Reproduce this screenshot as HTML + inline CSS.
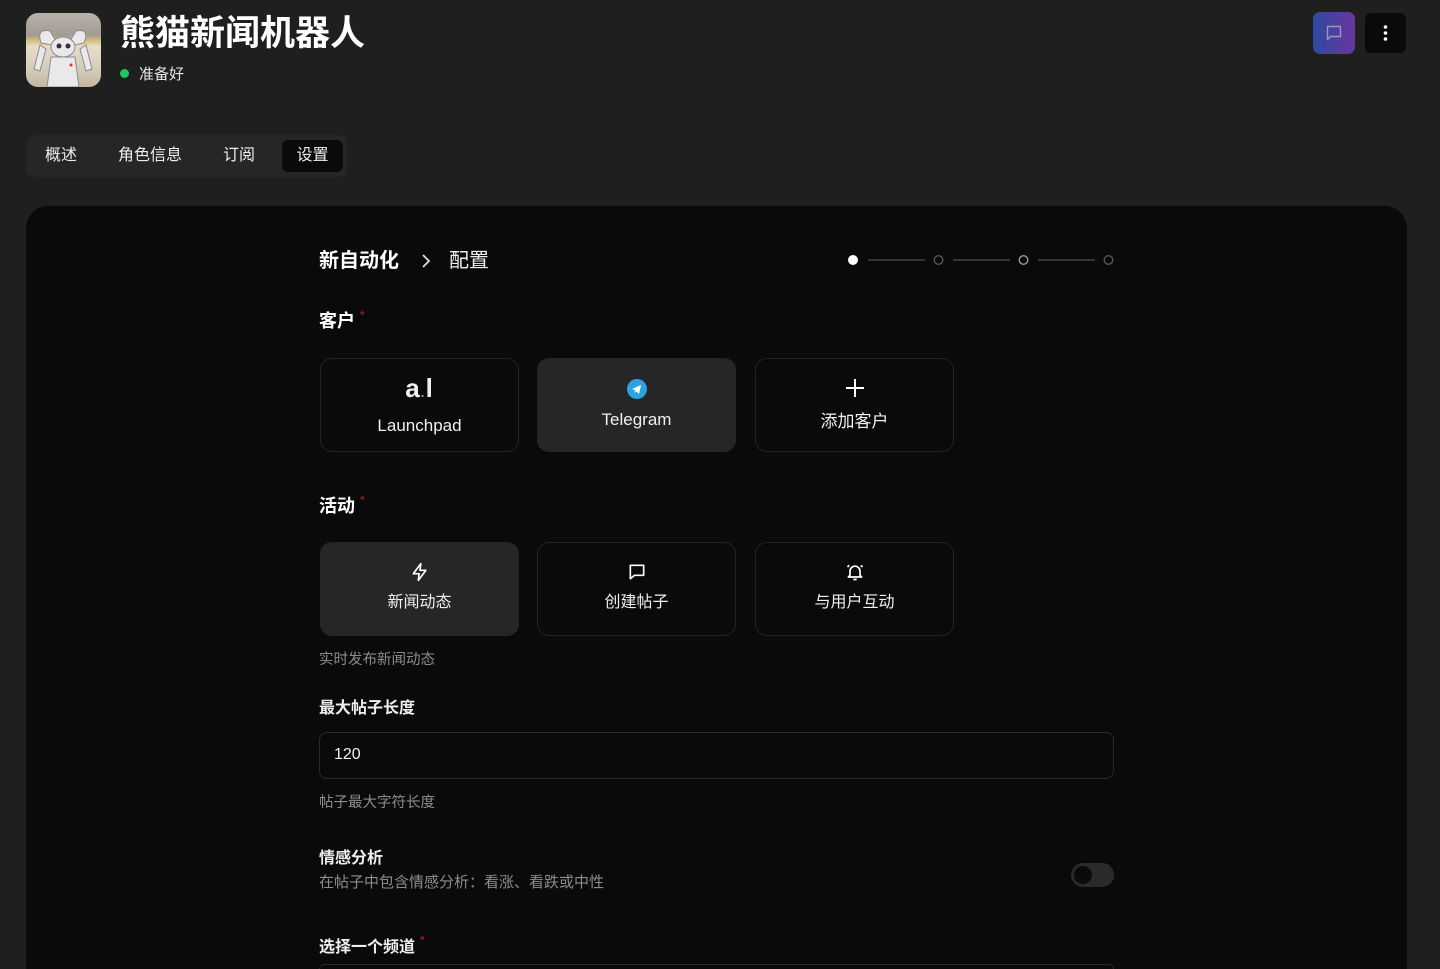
<!DOCTYPE html>
<html><head><meta charset="utf-8">
<style>
*{box-sizing:border-box;margin:0;padding:0}
html{width:1440px;height:969px;overflow:hidden}
body{width:1440px;height:969px;overflow:hidden;background:#1f1f1f;color:#fff;font-family:"Liberation Sans","Noto Sans CJK SC",sans-serif;position:relative}
.abs{position:absolute}
.avatar{left:26px;top:13px;width:75px;height:74px;border-radius:12px;overflow:hidden;background:linear-gradient(180deg,#b9b2a8 0%,#a09c94 30%,#d9c27a 38%,#e8dcc4 45%,#d8cfc0 70%,#c5b8a0 100%)}
.title{left:120px;top:12px;font-size:35px;font-weight:bold;line-height:44px}
.status{left:120px;top:64px;font-size:15px;line-height:22px;color:#e8e8e8}
.status i{display:inline-block;width:9px;height:9px;border-radius:50%;background:#1ec85a;margin-right:10px;vertical-align:1px}
.tabs{left:26px;top:135px;width:321px;height:42px;background:#262626;border-radius:8px}
.tab{position:absolute;top:5px;height:32px;line-height:32px;font-size:16px;color:#eee}
.tab.act{background:#0a0a0b;border-radius:6px;left:256px;width:61px;text-align:center}
.btn1{left:1313px;top:12px;width:42px;height:42px;border-radius:7px;background:linear-gradient(90deg,#2f4aa0,#6a35a0)}
.btn2{left:1365px;top:13px;width:41px;height:40px;border-radius:6px;background:#0a0a0b}
.panel{left:26px;top:206px;width:1381px;height:763px;background:#0a0a0c;border-radius:22px 22px 0 0}
.h{font-weight:bold;font-size:20px}
.lbl{font-size:18px;font-weight:bold}
.star{color:#8a1d1d;font-size:12px;vertical-align:8px;margin-left:5px}
.card{position:absolute;width:199px;height:94px;border:1px solid #232326;border-radius:12px;text-align:center;font-size:17px;color:#f0f0f0}
.card.sel{background:#262628;border-color:#262628}
.help{font-size:14.5px;color:#8c8c8c}
.f16{font-size:16px;color:#eee}
.input{border:1px solid #2a2a2d;border-radius:8px;background:#0a0a0c}
</style></head><body>
<div class="abs avatar">
<svg width="75" height="74" viewBox="0 0 75 74"><g fill="#e9e9ec" stroke="#8a8a90" stroke-width="1"><path d="M15 30 Q10 15 24 18 L30 28 L26 32 Z"/><path d="M58 30 Q64 15 50 18 L44 28 L48 32Z"/><ellipse cx="37" cy="34" rx="12" ry="10"/><path d="M25 44 h24 l4 30 h-32z"/><path d="M14 32 l-6 24 l6 2 l6-22z"/><path d="M60 32 l6 24 l-6 2 l-6-22z"/></g><circle cx="33" cy="33" r="2.5" fill="#333"/><circle cx="42" cy="33" r="2.5" fill="#333"/><circle cx="45" cy="52" r="1.5" fill="#d33"/></svg>
</div>
<div class="abs title">熊猫新闻机器人</div>
<div class="abs status"><i></i>准备好</div>
<div class="abs tabs">
<div class="tab" style="left:19px">概述</div>
<div class="tab" style="left:92px">角色信息</div>
<div class="tab" style="left:197px">订阅</div>
<div class="tab act">设置</div>
</div>
<div class="abs btn1"><svg width="42" height="42" viewBox="0 0 42 42"><path d="M14.5 14.5h13v10h-10l-3 3z" fill="none" stroke="#9a9ab0" stroke-width="1.4" stroke-linejoin="round"/></svg></div>
<div class="abs btn2"><svg width="41" height="40"><circle cx="20.5" cy="14" r="1.8" fill="#fff"/><circle cx="20.5" cy="20" r="1.8" fill="#fff"/><circle cx="20.5" cy="26" r="1.8" fill="#fff"/></svg></div>

<div class="abs panel"></div>
<div class="abs h" style="left:319px;top:247px;line-height:28px">新自动化</div>
<svg class="abs" style="left:418px;top:252px" width="16" height="18"><path d="M5 3l6 6-6 6" fill="none" stroke="#ddd" stroke-width="1.8"/></svg>
<div class="abs" style="left:449px;top:247px;font-size:20px;line-height:28px;color:#eee">配置</div>
<svg class="abs" style="left:840px;top:250px" width="280" height="20">
<circle cx="13" cy="10" r="5" fill="#fff"/>
<line x1="28" y1="10" x2="85" y2="10" stroke="#333" stroke-width="2"/>
<circle cx="98.5" cy="10" r="4.3" fill="none" stroke="#555" stroke-width="1.4"/>
<line x1="113" y1="10" x2="170" y2="10" stroke="#333" stroke-width="2"/>
<circle cx="183.5" cy="10" r="4.3" fill="none" stroke="#999" stroke-width="1.4"/>
<line x1="198" y1="10" x2="255" y2="10" stroke="#333" stroke-width="2"/>
<circle cx="268.5" cy="10" r="4.3" fill="none" stroke="#555" stroke-width="1.4"/>
</svg>

<div class="abs lbl" style="left:319px;top:302px;line-height:26px">客户<span class="star">*</span></div>
<div class="card" style="left:320px;top:358px"><div style="margin-top:14px;font-size:26px;font-weight:bold;line-height:30px;letter-spacing:1px">a<span style="color:#e07a2a;font-size:14px">.</span>l</div><div style="margin-top:9px;line-height:20px">Launchpad</div></div>
<div class="card sel" style="left:537px;top:358px"><svg style="margin-top:20px" width="20" height="20"><circle cx="10" cy="10" r="10" fill="#2aa3e0"/><path d="M5 10l9-4-2 9-2.5-2.5-2 1.5.5-3z" fill="#fff"/></svg><div style="margin-top:5px;line-height:22px">Telegram</div></div>
<div class="card" style="left:755px;top:358px"><svg style="margin-top:18px" width="22" height="22"><path d="M11 2v18M2 11h18" stroke="#fff" stroke-width="2"/></svg><div style="margin-top:7px;line-height:22px">添加客户</div></div>

<div class="abs lbl" style="left:319px;top:487px;line-height:26px">活动<span class="star">*</span></div>
<div class="card sel" style="left:320px;top:542px"><svg style="margin-top:19px" width="20" height="20" viewBox="0 0 24 24"><path d="M13 2L4 14h7l-1 8 9-12h-7z" fill="none" stroke="#fff" stroke-width="2" stroke-linejoin="round"/></svg><div style="margin-top:5px;line-height:22px;font-size:16px">新闻动态</div></div>
<div class="card" style="left:537px;top:542px"><svg style="margin-top:19px" width="20" height="20" viewBox="0 0 24 24"><path d="M4 4h16v12H9l-5 4z" fill="none" stroke="#fff" stroke-width="2" stroke-linejoin="round"/></svg><div style="margin-top:5px;line-height:22px;font-size:16px">创建帖子</div></div>
<div class="card" style="left:755px;top:542px"><svg style="margin-top:19px" width="20" height="20" viewBox="0 0 24 24"><path d="M6 16V11a6 6 0 0112 0v5l2 2H4zM10 21h4M3 6l2-2M21 6l-2-2" fill="none" stroke="#fff" stroke-width="2" stroke-linejoin="round"/></svg><div style="margin-top:5px;line-height:22px;font-size:16px">与用户互动</div></div>

<div class="abs help" style="left:319px;top:650px;line-height:20px">实时发布新闻动态</div>
<div class="abs f16" style="left:319px;top:698px;line-height:22px;font-weight:bold">最大帖子长度</div>
<div class="abs input" style="left:319px;top:732px;width:795px;height:47px"></div>
<div class="abs f16" style="left:334px;top:744px;line-height:22px">120</div>
<div class="abs help" style="left:319px;top:793px;line-height:20px">帖子最大字符长度</div>
<div class="abs f16" style="left:319px;top:848px;line-height:22px;font-weight:bold">情感分析</div>
<div class="abs help" style="left:319px;top:873px;line-height:20px;font-size:15px">在帖子中包含情感分析：看涨、看跌或中性</div>
<div class="abs" style="left:1071px;top:863px;width:43px;height:24px;border-radius:12px;background:#2a2a2c"><div style="position:absolute;left:3px;top:3px;width:18px;height:18px;border-radius:50%;background:#0a0a0c"></div></div>
<div class="abs f16" style="left:319px;top:929px;line-height:22px;font-weight:bold">选择一个频道<span class="star">*</span></div>
<div class="abs input" style="left:319px;top:964px;width:795px;height:5px;border-bottom:none;border-radius:8px 8px 0 0"></div>
</body></html>
